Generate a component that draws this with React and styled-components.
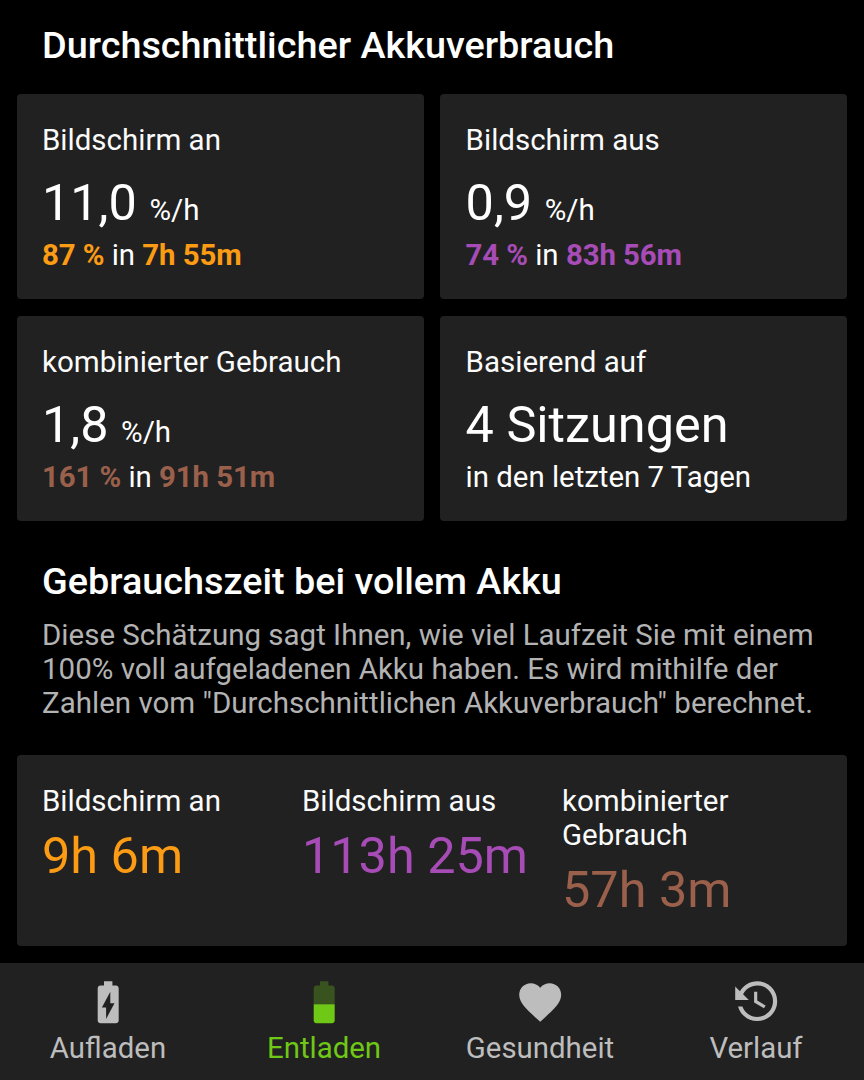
import styled, { createGlobalStyle } from "styled-components";

const colors = {
  orange: "#fc9b14",
  purple: "#a74cb6",
  brown: "#9b604b",
  green: "#6fc816",
  gray: "#bdbdbd",
};

const sessions = [
  { label: "Bildschirm an", value: "11,0", percent: "87 %", time: "7h 55m", color: colors.orange },
  { label: "Bildschirm aus", value: "0,9", percent: "74 %", time: "83h 56m", color: colors.purple },
  { label: "kombinierter Gebrauch", value: "1,8", percent: "161 %", time: "91h 51m", color: colors.brown },
];

const estimates = [
  { label: "Bildschirm an", time: "9h 6m", color: colors.orange },
  { label: "Bildschirm aus", time: "113h 25m", color: colors.purple },
  { label: "kombinierter Gebrauch", time: "57h 3m", color: colors.brown },
];

export default function App() {
  return (
    <>
      <GlobalStyle />
      <Screen>
        <Content>
          <Title>Durchschnittlicher Akkuverbrauch</Title>
          <Cards>
            {sessions.map((s) => (
              <Card key={s.label}>
                <Label>{s.label}</Label>
                <Value>
                  {s.value} <Unit>%/h</Unit>
                </Value>
                <Detail>
                  <Strong $color={s.color}>{s.percent}</Strong> in{" "}
                  <Strong $color={s.color}>{s.time}</Strong>
                </Detail>
              </Card>
            ))}
            <Card>
              <Label>Basierend auf</Label>
              <Value>4 Sitzungen</Value>
              <Detail>in den letzten 7 Tagen</Detail>
            </Card>
          </Cards>
          <Section>
            <Title>Gebrauchszeit bei vollem Akku</Title>
            <Description>
              Diese Schätzung sagt Ihnen, wie viel Laufzeit Sie mit einem 100%
              voll aufgeladenen Akku haben. Es wird mithilfe der Zahlen vom
              "Durchschnittlichen Akkuverbrauch" berechnet.
            </Description>
          </Section>
          <Estimates>
            {estimates.map((e) => (
              <Estimate key={e.label}>
                <Label>{e.label}</Label>
                <Time $color={e.color}>{e.time}</Time>
              </Estimate>
            ))}
          </Estimates>
        </Content>
        <Nav>
          <NavItem>
            <Icon viewBox="0 0 24 24">
              <path d="M15.67 4H14V2h-4v2H8.33C7.6 4 7 4.6 7 5.33v15.33C7 21.4 7.6 22 8.33 22h7.33c.74 0 1.34-.6 1.34-1.33V5.33C17 4.6 16.4 4 15.67 4zM11 20v-5.5H9L13 7v5.5h2L11 20z" />
            </Icon>
            Aufladen
          </NavItem>
          <NavItem $active>
            <Icon viewBox="0 0 24 24">
              <path
                fillOpacity=".3"
                d="M17 5.33C17 4.6 16.4 4 15.67 4H14V2h-4v2H8.33C7.6 4 7 4.6 7 5.33V13h10V5.33z"
              />
              <path d="M7 13v7.67C7 21.4 7.6 22 8.33 22h7.33c.74 0 1.34-.6 1.34-1.33V13H7z" />
            </Icon>
            Entladen
          </NavItem>
          <NavItem>
            <Icon viewBox="0 0 24 24">
              <path d="M12 21.35l-1.45-1.32C5.4 15.36 2 12.28 2 8.5 2 5.42 4.42 3 7.5 3c1.74 0 3.41.81 4.5 2.09C13.09 3.81 14.76 3 16.5 3 19.58 3 22 5.42 22 8.5c0 3.78-3.4 6.86-8.55 11.54L12 21.35z" />
            </Icon>
            Gesundheit
          </NavItem>
          <NavItem>
            <Icon viewBox="0 0 24 24">
              <path d="M11 7v5.11l4.71 2.79.79-1.28-4-2.37V7M12.5 2C8.97 2 5.91 3.92 4.27 6.77L2 4.5V11h6.5L5.75 8.25C6.96 5.73 9.5 4 12.5 4a7.5 7.5 0 0 1 7.5 7.5 7.5 7.5 0 0 1-7.5 7.5c-3.27 0-6.03-2.09-7.06-5h-2.1c1.1 4.03 4.77 7 9.16 7 5.24 0 9.5-4.25 9.5-9.5A9.5 9.5 0 0 0 12.5 2z" />
            </Icon>
            Verlauf
          </NavItem>
        </Nav>
      </Screen>
    </>
  );
}

const GlobalStyle = createGlobalStyle`
  * {
    box-sizing: border-box;
    margin: 0;
    padding: 0;
  }

  body {
    background-color: #000000;
    font-family: Roboto, sans-serif;
    font-size: 29.4px;
    line-height: 34px;
    color: #ffffff;
  }
`;

const Screen = styled.div`
  display: flex;
  flex-direction: column;
  width: 864px;
  height: 1080px;
  overflow: hidden;
`;

const Content = styled.main`
  flex: 1;
  padding: 23px 16.8px 0;
`;

const Title = styled.h1`
  padding: 0 25.2px;
  font-size: 37.8px;
  font-weight: 500;
  line-height: 44px;
`;

const Cards = styled.div`
  display: grid;
  grid-template-columns: 1fr 1fr;
  grid-auto-rows: 205px;
  gap: 17px 16.8px;
  margin-top: 27px;
`;

const Card = styled.div`
  display: flex;
  flex-direction: column;
  background-color: #212121;
  border-radius: 4px;
  padding: 29px 25.2px 0;
`;

const Label = styled.p`
  font-size: 29.5px;
  color: #fafafa;
`;

const Value = styled.p`
  height: 59px;
  margin-top: 16px;
  font-size: 50.4px;
  line-height: 59px;
`;

const Unit = styled.span`
  font-size: 29.5px;
  line-height: 1;
`;

const Detail = styled.p`
  margin-top: 6px;
`;

const Strong = styled.strong`
  font-weight: 700;
  letter-spacing: -0.1px;
  color: ${({ $color }) => $color};
`;

const Section = styled.section`
  margin-top: 38px;
`;

const Description = styled.p`
  margin-top: 15px;
  padding-left: 25.2px;
  font-size: 29.5px;
  color: #b3b3b3;
`;

const Estimates = styled.div`
  display: grid;
  grid-template-columns: repeat(3, 1fr);
  height: 191px;
  margin-top: 35px;
  padding: 29px 25.2px 0;
  background-color: #212121;
  border-radius: 4px;
`;

const Estimate = styled.div`
  padding-right: 20px;
`;

const Time = styled.p`
  margin-top: 8px;
  font-size: 50.4px;
  line-height: 59px;
  white-space: nowrap;
  color: ${({ $color }) => $color};
`;

const Nav = styled.nav`
  display: flex;
  height: 117px;
  background-color: #212121;
`;

const NavItem = styled.div`
  flex: 1;
  display: flex;
  flex-direction: column;
  align-items: center;
  gap: 4px;
  padding-top: 14px;
  color: ${({ $active }) => ($active ? colors.green : colors.gray)};
`;

const Icon = styled.svg`
  width: 50.4px;
  height: 50.4px;
  fill: currentColor;
`;
